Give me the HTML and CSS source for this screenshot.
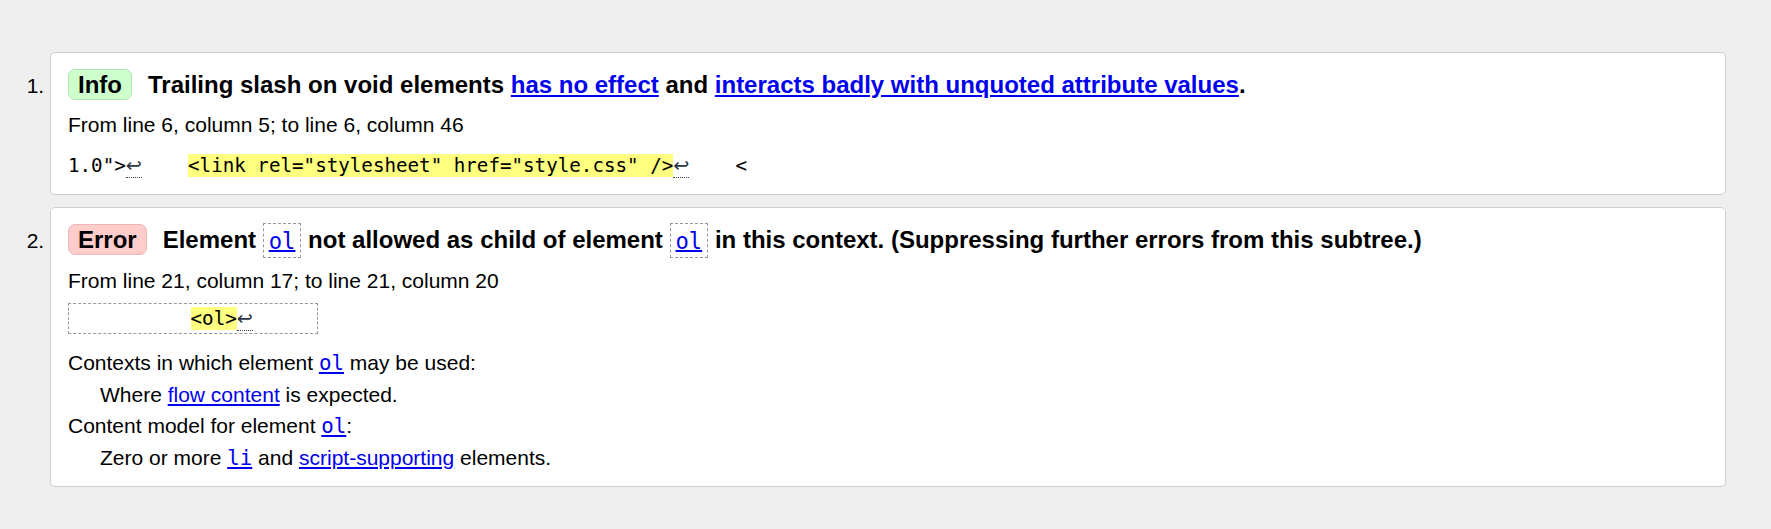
FILE: index.html
```html
<!DOCTYPE html>
<html lang="en">
<head>
<meta charset="utf-8">
<title>Nu Html Checker results</title>
<link rel="stylesheet" href="styles.css">
</head>
<body>
<ol class="results">
  <li class="msg">
    <p class="title"><span class="badge badge-info">Info</span><span class="msg-text">Trailing slash on void elements <a href="#">has no effect</a> and <a href="#">interacts badly with unquoted attribute values</a>.</span></p>
    <p class="location">From line 6, column 5; to line 6, column 46</p>
    <p class="extract"><code>1.0"&gt;<span class="lf">↩</span>    <b class="hl">&lt;link rel="stylesheet" href="style.css" /&gt;</b><span class="lf">↩</span>    &lt;</code></p>
  </li>
  <li class="msg">
    <p class="title"><span class="badge badge-error">Error</span><span class="msg-text">Element <code class="elname"><a href="#">ol</a></code> not allowed as child of element <code class="elname"><a href="#">ol</a></code> in this context. (Suppressing further errors from this subtree.)</span></p>
    <p class="location">From line 21, column 17; to line 21, column 20</p>
    <p class="extract extract-boxed"><code class="boxed">          <b class="hl">&lt;ol&gt;</b><span class="lf">↩</span>     </code></p>
    <dl class="details">
      <dt>Contexts in which element <a href="#"><code>ol</code></a> may be used:</dt>
      <dd>Where <a href="#">flow content</a> is expected.</dd>
      <dt>Content model for element <a href="#"><code>ol</code></a>:</dt>
      <dd>Zero or more <a href="#"><code>li</code></a> and <a href="#">script-supporting</a> elements.</dd>
    </dl>
  </li>
</ol>
</body>
</html>
```

FILE: styles.css
```css
html, body {
  margin: 0;
  padding: 0;
  background: #efefef;
}

body {
  font-family: "Liberation Sans", Arial, sans-serif;
  font-size: 21px;
  color: #000;
}

a {
  color: #0000ee;
  text-decoration: underline;
}

code {
  font-family: "DejaVu Sans Mono", monospace;
  font-size: 19.2px;
}

.results {
  margin: 0;
  padding: 52px 45px 40px 50px;
}

.msg {
  background: #fff;
  border: 1px solid #cfcfcf;
  border-radius: 5px;
  padding: 16px 17px 16px 17px;
  margin-bottom: 12px;
}

.msg p {
  margin: 0;
}

.title {
  font-weight: bold;
  font-size: 24px;
  line-height: 31px;
}

.badge {
  display: inline-block;
  padding: 1px 9px;
  line-height: 27px;
  border-radius: 7px;
  margin-right: 16px;
}

.badge-info {
  background: #ccffcc;
  border: 1px solid #b6e3b6;
}

.badge-error {
  background: #ffcccc;
  border: 1px solid #eab7b7;
}

.elname {
  font-size: 22.2px;
  font-weight: normal;
  border: 1px dashed #999;
  padding: 3.5px 5px;
}

.msg .location {
  line-height: 24px;
  margin-top: 13px;
}

.msg .extract {
  line-height: 24px;
  margin-top: 16px;
}

.msg .extract-boxed {
  margin-top: 13px;
}

.extract code {
  white-space: pre;
}

.hl {
  font-weight: normal;
  background: #ffff80;
}

.lf {
  font-family: "DejaVu Sans", sans-serif;
  color: #2a3440;
  border-bottom: 1px dotted #444;
}

.boxed {
  border: 1px dashed #999;
  padding: 3px 6px;
}

.details {
  margin: 20px 0 0 0;
  line-height: 24px;
}

.details code {
  font-size: 20.8px;
}

.details > * + * {
  margin-top: 7.5px;
}

.details dt {
  margin-left: 0;
}

.details dd {
  margin-left: 32px;
  margin-bottom: 0;
}
```
